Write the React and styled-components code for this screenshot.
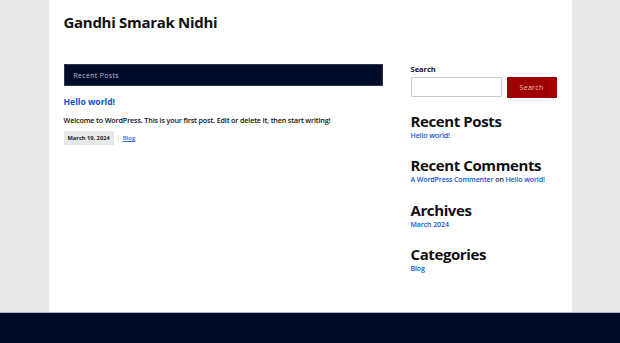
import React from "react";
import styled, { createGlobalStyle } from "styled-components";

const GlobalStyle = createGlobalStyle`
  html, body {
    margin: 0;
    padding: 0;
    background: #e9e9e9;
    font-family: "Open Sans", "Liberation Sans", sans-serif;
    color: #111;
  }
`;

const Page = styled.div`
  display: flex;
  flex-direction: column;
  min-height: 343px;
`;

const Container = styled.div`
  width: 523px;
  margin: 0 auto;
  height: 312px;
  background: #fff;
  box-sizing: border-box;
  padding: 0 15px;
`;

const SiteTitle = styled.h1`
  margin: 0;
  padding-top: 12px;
  font-size: 15px;
  font-weight: 700;
  line-height: 20px;
  letter-spacing: -0.3px;
  color: #111;
`;

const Columns = styled.div`
  display: flex;
  justify-content: space-between;
  margin-top: 32px;
`;

const Main = styled.main`
  width: 319px;
`;

const SectionBar = styled.div`
  background: #020b29;
  border: 1px solid #2a3350;
  height: 20px;
  display: flex;
  align-items: center;
  padding-left: 9px;
  font-size: 7px;
  letter-spacing: 0.3px;
  color: #b9bdc8;
`;

const PostTitle = styled.a`
  display: block;
  margin-top: 9px;
  font-size: 8.6px;
  font-weight: 700;
  color: #0b55d4;
  text-decoration: none;
  line-height: 14px;
`;

const PostBody = styled.p`
  margin: 5px 0 0;
  font-size: 7.2px;
  font-weight: 600;
  line-height: 12px;
  letter-spacing: -0.15px;
  color: #111;
`;

const Meta = styled.div`
  display: flex;
  align-items: center;
  gap: 4px;
  margin-top: 5px;
`;

const DateTag = styled.span`
  background: #e9e9e9;
  font-size: 5.7px;
  font-weight: 700;
  padding: 0 4px;
  height: 14px;
  display: flex;
  align-items: center;
  color: #222;
`;

const Divider = styled.span`
  width: 1px;
  height: 7px;
  background: #e4e4e4;
`;

const SmallLink = styled.a`
  font-size: 6px;
  font-weight: 600;
  color: #2d6fe0;
  text-decoration: underline;
`;

const Sidebar = styled.aside`
  width: 146px;
`;

const Label = styled.div`
  font-size: 7.5px;
  font-weight: 700;
  line-height: 10px;
`;

const SearchRow = styled.div`
  display: flex;
  gap: 5px;
  margin-top: 3px;
`;

const SearchInput = styled.input`
  width: 91px;
  height: 20px;
  box-sizing: border-box;
  border: 1px solid #c9c9c9;
  border-radius: 1px;
  margin: 0;
  padding: 0;
`;

const SearchButton = styled.button`
  width: 50px;
  height: 21px;
  background: #a00000;
  border: none;
  border-radius: 1px;
  color: #e8c6c6;
  font-family: inherit;
  font-size: 7px;
  letter-spacing: 0.3px;
  padding: 0;
`;

const WidgetTitle = styled.h2`
  margin: ${(p) => p.$top}px 0 0;
  font-size: 15px;
  font-weight: 700;
  line-height: 20px;
  letter-spacing: -0.4px;
  color: #111;
`;

const WidgetText = styled.div`
  font-size: 7px;
  font-weight: 600;
  line-height: 10px;
  letter-spacing: -0.1px;
  color: #222;
`;

const Link = styled.a`
  color: #0b55d4;
  text-decoration: none;
`;

const Footer = styled.footer`
  height: 31px;
  background: #020c29;
  border-top: 1px solid #a9b2c6;
`;

export default function App() {
  return (
    <Page>
      <GlobalStyle />
      <Container>
        <SiteTitle>Gandhi Smarak Nidhi</SiteTitle>
        <Columns>
          <Main>
            <SectionBar>Recent Posts</SectionBar>
            <PostTitle href="#">Hello world!</PostTitle>
            <PostBody>
              Welcome to WordPress. This is your first post. Edit or delete it, then start writing!
            </PostBody>
            <Meta>
              <DateTag>March 19, 2024</DateTag>
              <Divider />
              <SmallLink href="#">Blog</SmallLink>
            </Meta>
          </Main>
          <Sidebar>
            <Label>Search</Label>
            <SearchRow>
              <SearchInput type="text" />
              <SearchButton>Search</SearchButton>
            </SearchRow>
            <WidgetTitle $top={13}>Recent Posts</WidgetTitle>
            <WidgetText>
              <Link href="#">Hello world!</Link>
            </WidgetText>
            <WidgetTitle $top={14}>Recent Comments</WidgetTitle>
            <WidgetText>
              <Link href="#">A WordPress Commenter</Link> on <Link href="#">Hello world!</Link>
            </WidgetText>
            <WidgetTitle $top={15}>Archives</WidgetTitle>
            <WidgetText>
              <Link href="#">March 2024</Link>
            </WidgetText>
            <WidgetTitle $top={14}>Categories</WidgetTitle>
            <WidgetText>
              <Link href="#">Blog</Link>
            </WidgetText>
          </Sidebar>
        </Columns>
      </Container>
      <Footer />
    </Page>
  );
}
